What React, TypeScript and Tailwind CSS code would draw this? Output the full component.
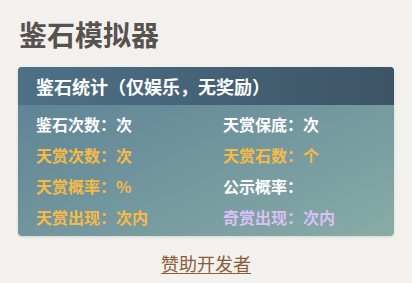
const stats = [
  { label: "鉴石次数：", value: "次", color: "text-white" },
  { label: "天赏保底：", value: "次", color: "text-white" },
  { label: "天赏次数：", value: "次", color: "text-[#f7bb45]" },
  { label: "天赏石数：", value: "个", color: "text-[#f7bb45]" },
  { label: "天赏概率：", value: "%", color: "text-[#f7bb45]" },
  { label: "公示概率：", value: "", color: "text-white" },
  { label: "天赏出现：", value: "次内", color: "text-[#f7bb45]" },
  { label: "奇赏出现：", value: "次内", color: "text-[#d9c0f5]" },
];

const App: React.FC = () => {
  return (
    <div
      className="min-h-screen bg-[#f3f1ee] px-[18px]"
      style={{ fontFamily: '"Noto Sans CJK SC", "Noto Sans", sans-serif' }}
    >
      <h1 className="pt-[17px] pl-px text-[28px] font-bold leading-[34px] text-[#57524d]">
        鉴石模拟器
      </h1>
      <div className="mt-4 overflow-hidden rounded-[4px] bg-gradient-to-br from-[#5a7f94] to-[#88aca6] shadow-sm">
        <div className="flex h-[38px] items-center bg-gradient-to-r from-[#4e7187] to-[#3c5466] px-[18px] text-[18px] font-semibold text-white">
          鉴石统计（仅娱乐，无奖励）
        </div>
        <div className="grid grid-cols-[187px_1fr] px-[18px] pt-1 pb-[3px] text-[16px] font-bold leading-[31px]">
          {stats.map((s, i) => (
            <div key={i} className={s.color}>
              {s.label}
              {s.value}
            </div>
          ))}
        </div>
      </div>
      <div className="mt-[14px] text-center">
        <a
          href="#"
          className="text-[18px] leading-[27px] text-[#8a5d3b] underline underline-offset-2"
        >
          赞助开发者
        </a>
      </div>
    </div>
  );
};

export default App;
